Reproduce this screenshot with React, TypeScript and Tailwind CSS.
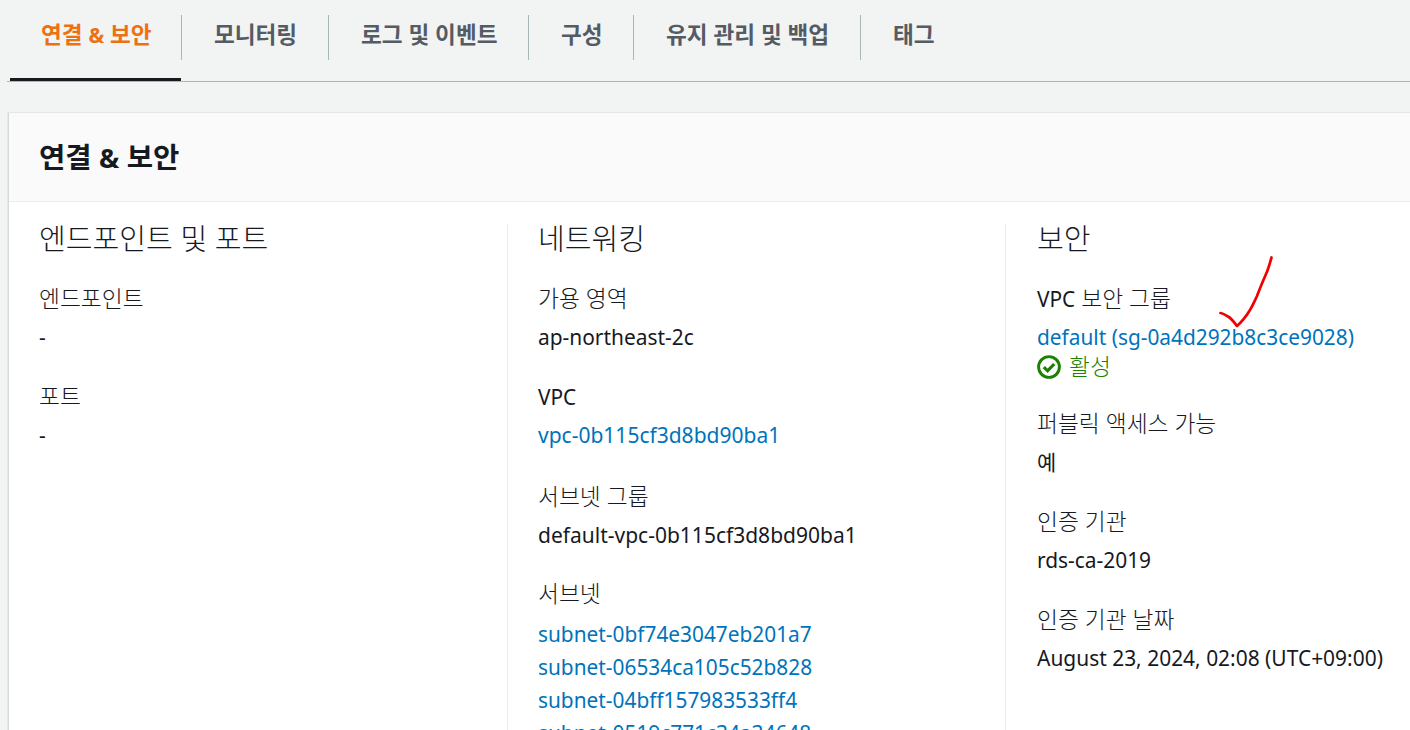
import React from 'react';

const FONT = "font-['Noto_Sans','Noto_Sans_CJK_KR',sans-serif]";

const tabs = [
  { label: <span>연결 <span className="text-[21px]">&amp;</span> 보안</span>, key: 'connect', width: 'w-[172px]', active: true },
  { label: '모니터링', key: 'monitor', width: 'w-[147px]' },
  { label: '로그 및 이벤트', key: 'logs', width: 'w-[200px]' },
  { label: '구성', key: 'config', width: 'w-[105px]' },
  { label: '유지 관리 및 백업', key: 'maint', width: 'w-[227px]' },
  { label: '태그', key: 'tags', width: 'w-[105px]', last: true },
];

const Field: React.FC<{ label: React.ReactNode; children: React.ReactNode; gap?: string }> = ({ label, children, gap = 'mb-[21px]' }) => (
  <div className={gap}>
    <div className="h-[39px] text-[22.75px] font-light leading-[39px] text-[#16191f]">{label}</div>
    {children}
  </div>
);

const Value: React.FC<{ children: React.ReactNode }> = ({ children }) => (
  <div className="h-[38px] text-[20.9px] leading-[38px] text-[#16191f]">{children}</div>
);

const Link: React.FC<{ children: React.ReactNode }> = ({ children }) => (
  <div className="h-[33px] text-[20.85px] leading-[33px] text-[#0073bb]">{children}</div>
);

const Heading: React.FC<{ children: React.ReactNode }> = ({ children }) => (
  <h3 className="mb-[25px] h-[30px] text-[29.1px] font-light leading-[30px] text-[#16191f]">{children}</h3>
);

export default function App() {
  return (
    <div className={`h-[730px] w-[1410px] overflow-hidden bg-[#f2f3f3] ${FONT}`}>
      <div className="ml-[7px] flex h-[82px] border-b border-[#aab7b8] pl-[3px]">
        {tabs.map((tab) => (
          <div key={tab.key} className={`${tab.width} h-[81px] shrink-0 pt-[15px]`}>
            <div
              className={`flex h-[45px] items-center pb-[5px] text-[22.6px] font-bold ${tab.active ? 'pl-[31px]' : 'pl-[32px]'} ${tab.last ? '' : 'border-r border-[#aab7b8]'} ${tab.active ? 'text-[#ec7211]' : 'text-[#545b64]'}`}
            >
              {tab.label}
            </div>
            {tab.active && <div className="mt-[18px] h-[3px] w-[171px] bg-[#16191f]" />}
          </div>
        ))}
      </div>

      <div className="relative ml-[8px] mt-[31px] border-l border-[#d5dbdb] bg-white shadow-[0_0_1px_rgba(0,28,36,0.3)]">
        <div className="flex h-[89px] items-center border-b border-[#eaeded] bg-[#fafafa] pl-[30px] text-[28.6px] font-bold text-[#16191f]">
          <span>연결 <span className="text-[27px]">&amp;</span> 보안</span>
        </div>

        <div className="flex pt-[22px]">
          <div className="w-[498px] shrink-0 pl-[30px]">
            <Heading>엔드포인트 및 포트</Heading>
            <Field label="엔드포인트">
              <Value>-</Value>
            </Field>
            <Field label="포트">
              <Value>-</Value>
            </Field>
          </div>

          <div className="h-[520px] w-[498px] shrink-0 border-l border-[#eaeded] pl-[30px]">
            <Heading>네트워킹</Heading>
            <Field label="가용 영역">
              <Value>ap-northeast-2c</Value>
            </Field>
            <Field label={<span className="text-[20.85px] font-normal">VPC</span>} gap="mb-[23px]">
              <Value>
                <span className="text-[21px] text-[#0073bb]">vpc-0b115cf3d8bd90ba1</span>
              </Value>
            </Field>
            <Field label="서브넷 그룹" gap="mb-[20px]">
              <Value>
                <span className="text-[21px]">default-vpc-0b115cf3d8bd90ba1</span>
              </Value>
            </Field>
            <Field label="서브넷">
              <div className="pt-[5px]">
                <Link>subnet-0bf74e3047eb201a7</Link>
                <Link>subnet-06534ca105c52b828</Link>
                <Link>subnet-04bff157983533ff4</Link>
                <Link>subnet-0519c771c34a34648</Link>
              </div>
            </Field>
          </div>

          <div className="flex-1 border-l border-[#eaeded] pl-[31px]">
            <Heading>보안</Heading>
            <Field label={<><span className="text-[20.85px] font-normal">VPC</span> 보안 그룹</>}>
              <div className="h-[33px] text-[20.85px] leading-[38px] text-[#0073bb]">default (sg-0a4d292b8c3ce9028)</div>
              <div className="mb-[4px] flex h-[32px] items-center gap-[8px] text-[22.75px] font-light text-[#1d8102]">
                <svg width="24" height="24" viewBox="0 0 24 24" fill="none" stroke="#1d8102">
                  <circle cx="12" cy="12" r="10.4" strokeWidth="2.900" />
                  <path d="M6.800 12.200l3.800 3.600 6.600-6.800" strokeWidth="3.200" />
                </svg>
                <span>활성</span>
              </div>
            </Field>
            <Field label="퍼블릭 액세스 가능">
              <Value>예</Value>
            </Field>
            <Field label="인증 기관">
              <Value>rds-ca-2019</Value>
            </Field>
            <Field label="인증 기관 날짜">
              <Value>
                <span className="text-[20.95px]">August 23, 2024, 02:08 (UTC+09:00)</span>
              </Value>
            </Field>
          </div>
        </div>

        {/* Red check mark drawn over the screenshot */}
        <svg className="absolute left-[1209px] top-[140px]" width="66" height="78" viewBox="0 0 66 78" fill="none">
          <path
            d="M2.500 60c3 .5 5 2 7.500 3.500 3.500 2 6 5.500 9 9.500 4-3.500 9-9.500 13-16 3-5 5-10 7-14 3-8 6-15 9-22 2-4 3-8 5.500-16.500"
            stroke="#f00000"
            strokeWidth="2.700"
            strokeLinecap="round"
            strokeLinejoin="round"
          />
        </svg>
      </div>
    </div>
  );
}
